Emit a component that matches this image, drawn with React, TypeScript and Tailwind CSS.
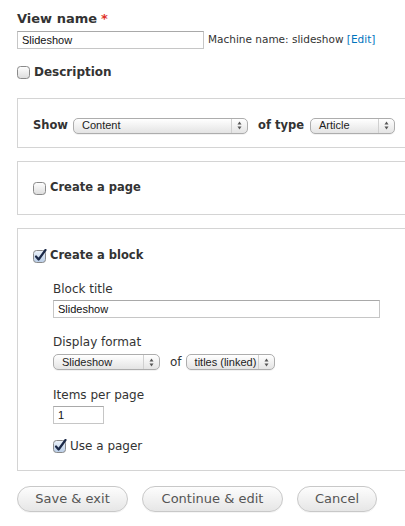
import React from 'react'

const uiFont = "font-['DejaVu_Sans','Lucida_Grande',sans-serif]"
const inputFont = "font-['Liberation_Sans',Arial,sans-serif]"

function Checkbox({ checked }: { checked?: boolean }) {
  return (
    <svg width="14" height="14" viewBox="0 0 14 14" className="shrink-0">
      <defs>
        <linearGradient id={checked ? 'cbOn' : 'cbOff'} x1="0" y1="0" x2="0" y2="1">
          <stop offset="0" stopColor={checked ? '#eef4fb' : '#ffffff'} />
          <stop offset="1" stopColor={checked ? '#b9cde6' : '#dcdcdc'} />
        </linearGradient>
      </defs>
      <rect x="0.5" y="1.5" width="12" height="12" rx="3" fill={`url(#${checked ? 'cbOn' : 'cbOff'})`} stroke="#8a8a8a" />
      {checked && (
        <path d="M3 7.5 L5.6 10.5 L12.5 1" fill="none" stroke="#1c2a48" strokeWidth="2.2" strokeLinecap="round" strokeLinejoin="round" />
      )}
    </svg>
  )
}

function Select({ value, width }: { value: string; width: string }) {
  return (
    <div
      className={`${width} h-[16px] flex items-center rounded-[5px] border border-[#adadad] bg-gradient-to-b from-white to-[#e4e4e4] shadow-[0_1px_0_rgba(0,0,0,0.05)]`}
    >
      <span className={`${inputFont} flex-1 pl-[8px] text-[11px] leading-none text-[#222] truncate`}>{value}</span>
      <span className="h-full w-[16px] border-l border-[#d0d0d0] flex items-center justify-center">
        <svg width="5" height="9" viewBox="0 0 5 9">
          <path d="M2.5 0.5 L4.5 3.5 L0.5 3.5 Z" fill="#555" />
          <path d="M2.5 8.5 L4.5 5.5 L0.5 5.5 Z" fill="#555" />
        </svg>
      </span>
    </div>
  )
}

function TextInput({ value, width }: { value: string; width: string }) {
  return (
    <div className={`${width} h-[18px] flex items-center border border-[#c6c6c6] border-t-[#a9a9a9] bg-white px-[4px]`}>
      <span className={`${inputFont} text-[11px] leading-none text-[#111]`}>{value}</span>
    </div>
  )
}

function Button({ label, width }: { label: string; width: string }) {
  return (
    <button
      className={`${width} h-[26px] rounded-full border border-[#c8c8c8] bg-gradient-to-b from-[#fdfdfd] to-[#e6e6e6] text-[13px] text-[#555] ${uiFont} shadow-[0_1px_0_rgba(0,0,0,0.04)]`}
    >
      {label}
    </button>
  )
}

export default function App() {
  return (
    <div className={`w-[405px] h-[526px] overflow-hidden bg-white pl-[17px] pt-[10px] text-[#333] ${uiFont}`}>
      {/* View name */}
      <div className="h-[18px] flex items-center text-[13px] font-bold">
        View name <span className="ml-[4px] text-[#e0312a]">*</span>
      </div>
      <div className="mt-[3px] flex items-center gap-[4px]">
        <TextInput value="Slideshow" width="w-[187px]" />
        <span className="text-[10.5px] text-[#333] whitespace-nowrap">
          Machine name: slideshow <span className="text-[#0074bd]">[Edit]</span>
        </span>
      </div>

      {/* Description */}
      <div className="mt-[14px] h-[18px] flex items-center gap-[3px]">
        <Checkbox />
        <span className="text-[12px] font-bold">Description</span>
      </div>

      {/* Show */}
      <div className="mt-[17px] -mr-[20px] h-[50px] border border-[#d4d4d4] flex items-start pt-[18px] pl-[15px]">
        <div className="flex items-center">
          <span className="text-[11.5px] font-bold mr-[5px]">Show</span>
          <Select value="Content" width="w-[175px]" />
          <span className="text-[11.5px] font-bold ml-[10px] mr-[6px]">of type</span>
          <Select value="Article" width="w-[85px]" />
        </div>
      </div>

      {/* Create a page */}
      <div className="mt-[13px] -mr-[20px] h-[54px] border border-[#d4d4d4] flex items-center pl-[15px] gap-[3px]">
        <Checkbox />
        <span className="text-[11.5px] font-bold">Create a page</span>
      </div>

      {/* Create a block */}
      <div className="mt-[13px] -mr-[20px] h-[243px] border border-[#d4d4d4] pl-[15px] pt-[18px]">
        <div className="h-[18px] flex items-center gap-[3px]">
          <Checkbox checked />
          <span className="text-[11.5px] font-bold">Create a block</span>
        </div>

        <div className="pl-[20px]">
          <div className="mt-[15px] h-[18px] flex items-center text-[12px]">Block title</div>
          <div className="mt-[2px]">
            <TextInput value="Slideshow" width="w-[327px]" />
          </div>

          <div className="mt-[15px] h-[18px] flex items-center text-[12px]">Display format</div>
          <div className="mt-[2px] flex items-center">
            <Select value="Slideshow" width="w-[107px]" />
            <span className="text-[12px] ml-[10px] mr-[4px]">of</span>
            <Select value="titles (linked)" width="w-[89px]" />
          </div>

          <div className="mt-[15px] h-[18px] flex items-center text-[12px]">Items per page</div>
          <div className="mt-[2px]">
            <TextInput value="1" width="w-[51px]" />
          </div>

          <div className="mt-[13px] h-[18px] flex items-center gap-[3px]">
            <Checkbox checked />
            <span className="text-[12px]">Use a pager</span>
          </div>
        </div>
      </div>

      {/* Actions */}
      <div className="mt-[15px] flex items-center gap-[14px]">
        <Button label="Save & exit" width="w-[111px]" />
        <Button label="Continue & edit" width="w-[141px]" />
        <Button label="Cancel" width="w-[80px]" />
      </div>
    </div>
  )
}
